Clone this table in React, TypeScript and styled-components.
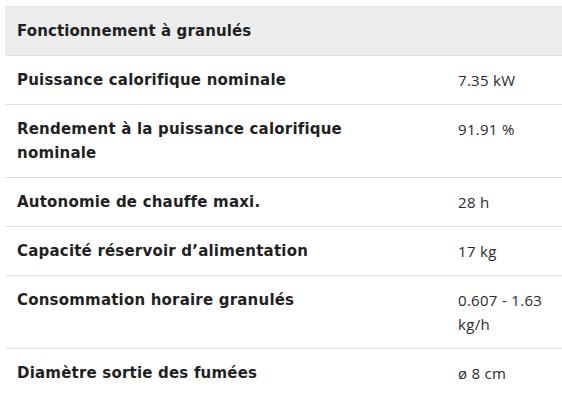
import styled, { createGlobalStyle } from "styled-components";

const GlobalStyle = createGlobalStyle`
  html, body {
    margin: 0;
    padding: 0;
    background: #ffffff;
    overflow: hidden;
  }
  body {
    font-family: "Open Sans", "Liberation Sans", sans-serif;
  }
`;

interface Spec {
  label: string;
  value: string;
}

const specs: Spec[] = [
  { label: "Puissance calorifique nominale", value: "7.35 kW" },
  { label: "Rendement à la puissance calorifique nominale", value: "91.91 %" },
  { label: "Autonomie de chauffe maxi.", value: "28 h" },
  { label: "Capacité réservoir d’alimentation", value: "17 kg" },
  { label: "Consommation horaire granulés", value: "0.607 - 1.63 kg/h" },
  { label: "Diamètre sortie des fumées", value: "ø 8 cm" },
];

const App = () => {
  return (
    <Page>
      <GlobalStyle />
      <SpecTable>
        <colgroup>
          <col style={{ width: 441 }} />
          <col style={{ width: 116 }} />
        </colgroup>
        <thead>
          <tr>
            <HeadCell colSpan={2}>Fonctionnement à granulés</HeadCell>
          </tr>
        </thead>
        <tbody>
          {specs.map((item, i) => (
            <Row key={i} $last={i === specs.length - 1}>
              <Label>{item.label}</Label>
              <Value>{item.value}</Value>
            </Row>
          ))}
        </tbody>
      </SpecTable>
    </Page>
  );
};

export default App;

const Page = styled.div`
  padding: 6px 0 0 5px;
  width: 562px;
  box-sizing: border-box;
`;

const SpecTable = styled.table`
  width: 557px;
  border-collapse: collapse;
  table-layout: fixed;
  color: #1f1f24;
`;

const HeadCell = styled.th`
  background: #ededed;
  border-top: 1px solid #e2e2e6;
  border-bottom: 1px solid #dfdfe3;
  text-align: left;
  padding: 12px;
  font-family: "DejaVu Sans", "Open Sans", sans-serif;
  font-size: 15px;
  line-height: 24px;
  font-weight: 700;
  letter-spacing: 0.1px;
  height: 24px;
`;

const Row = styled.tr<{ $last: boolean }>`
  border-bottom: ${(p) => (p.$last ? "none" : "1px solid #dfdfe3")};
`;

const Label = styled.td`
  vertical-align: top;
  padding: 12px 40px 12px 12px;
  font-family: "DejaVu Sans", "Open Sans", sans-serif;
  font-size: 15px;
  line-height: 24px;
  font-weight: 700;
  letter-spacing: 0.2px;
  color: #1f1f24;
`;

const Value = styled.td`
  vertical-align: top;
  padding: 12px;
  font-size: 15px;
  line-height: 24px;
  font-weight: 400;
  letter-spacing: 0.3px;
  color: #2a2a30;
`;
